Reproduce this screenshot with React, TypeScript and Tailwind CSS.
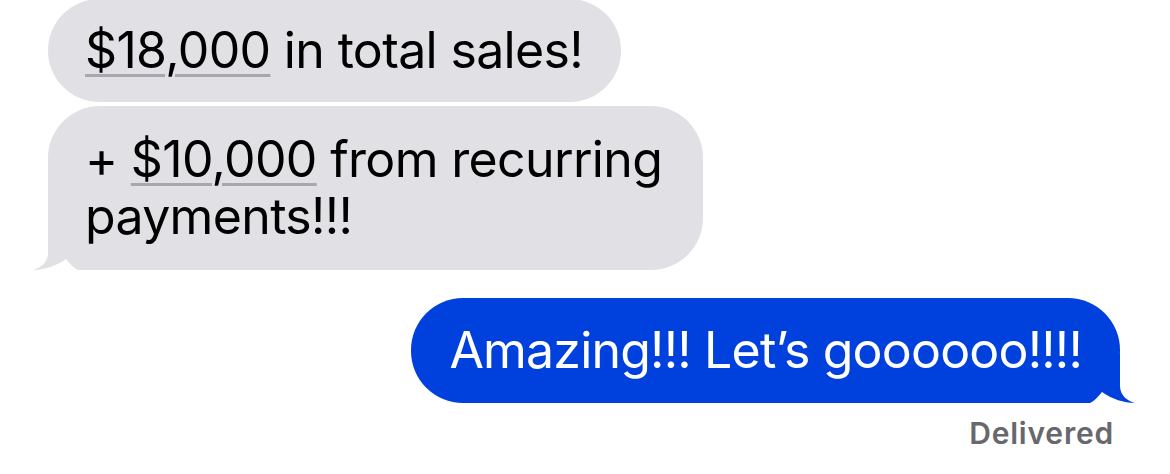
import { type ReactNode } from "react";

const font = { fontFamily: "Inter, 'Noto Sans', sans-serif" };

function Tail({ color, flip }: { color: string; flip?: boolean }) {
	return (
		<svg
			width="72"
			height="50"
			viewBox="0 0 72 50"
			className={flip ? "absolute -right-[16px] bottom-0 -scale-x-100" : "absolute -left-[16px] bottom-0"}
		>
			<path
				d="M16 0 L16 33 C16 42 9 48 1 50 C12 50 24 46 34 39 C38 44 42 48 46 50 L72 50 L72 0 Z"
				fill={color}
			/>
		</svg>
	);
}

function Money({ children }: { children: ReactNode }) {
	return (
		<span className="underline decoration-[#a7a7ac] decoration-[3px] underline-offset-[6px]">
			{children}
		</span>
	);
}

export default function App() {
	return (
		<div className="w-[1170px] h-[474px] bg-white overflow-hidden" style={font}>
			<div className="flex flex-col pl-[48px] pr-[50px]">
				<div className="self-start -mt-[1px] rounded-[52px] bg-[#e0e0e5] pl-[37px] pr-[38px] py-[23px] text-[50px] leading-[57px] text-black tracking-[-0.65px]">
					<Money>$18,000</Money> in total sales!
				</div>

				<div className="relative self-start mt-[4px] max-w-[655px] rounded-[52px] bg-[#e0e0e5] px-[37px] py-[25px] text-[50px] leading-[57px] text-black tracking-[-0.65px]">
					<Tail color="#e0e0e5" />
					<span className="relative">
						+ <Money>$10,000</Money> from recurring payments!!!
					</span>
				</div>

				<div className="relative self-end mt-[28px] rounded-[52px] bg-[#0041de] pl-[38px] pr-[38px] py-[24px] text-[50px] leading-[57px] text-white tracking-[-0.8px]">
					<Tail color="#0041de" flip />
					<span className="relative">Amazing!!! Let’s goooooo!!!!</span>
				</div>

				<p className="self-end mt-[12px] mr-[6px] text-[30px] leading-[36px] font-semibold tracking-[0.8px] text-[#67676c]">
					Delivered
				</p>
			</div>
		</div>
	);
}
